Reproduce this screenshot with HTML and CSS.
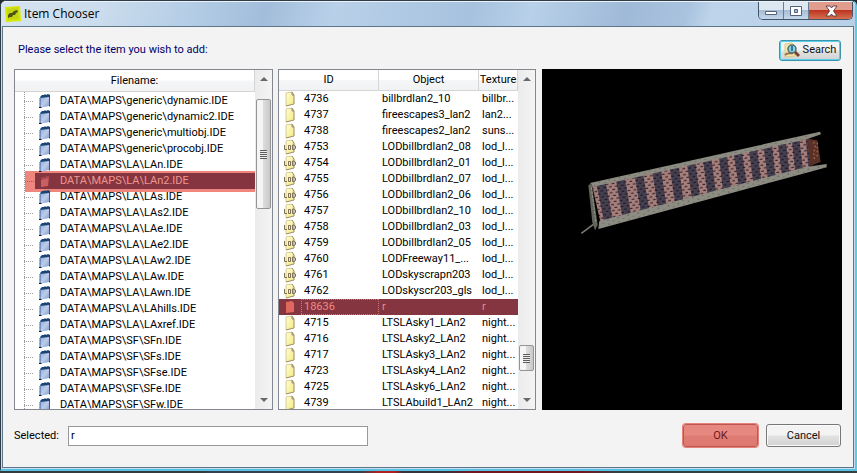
FILE: index.html
```html
<!DOCTYPE html>
<html lang="en">
<head>
<meta charset="utf-8">
<title>Item Chooser</title>
<link rel="stylesheet" href="styles.css">
</head>
<body>
<svg class="defs" aria-hidden="true">
  <defs>
    <linearGradient id="blue" x1="0" y1="0" x2="1" y2="1"><stop offset="0" stop-color="#8fabd4"/><stop offset=".5" stop-color="#bccbea"/><stop offset="1" stop-color="#8499cf"/></linearGradient>
    <linearGradient id="yellow" x1="0" y1="0" x2="1" y2="1"><stop offset="0" stop-color="#fffbd8"/><stop offset="1" stop-color="#f4ea7c"/></linearGradient>
    <symbol id="book" viewBox="0 0 14 16"><path d="M2 4l2-2h2l1-1 1 1 2-1 2 1v3L3 6z" fill="#17456f"/><path d="M2 5l9-1v9l-9 2z" fill="url(#blue)"/><path d="M11 4l1-1v10l-1 1z" fill="#3c4f80"/><path d="M2 5v9" stroke="#40639a" fill="none"/><path d="M1 14h3l-1 1H1z" fill="#15151c"/></symbol>
    <symbol id="page" viewBox="0 0 12 16"><path d="M2 2l6-1 2 3v9l-8 2z" fill="url(#yellow)"/><path d="M2 15V2l6-1" fill="none" stroke="#d9cc9a"/><path d="M8 1v3h2M8 1l2 3v9l-8 2" fill="none" stroke="#9b8b62"/></symbol>
    <symbol id="lod" viewBox="0 0 12 16"><path d="M2 2l6-1 2 3v9l-8 2z" fill="url(#yellow)"/><path d="M2 15V2l6-1" fill="none" stroke="#d9cc9a"/><path d="M8 1l2 3v9l-8 2" fill="none" stroke="#9b8b62"/><path d="M.5 6v4.500h2.500M4.500 6.500h2v4h-2zM8.500 6v4.500H10l1.500-1V7L10 6z" fill="none" stroke="#7a7055"/></symbol>
  </defs>
</svg>
<main class="window">
  <header class="titlebar">
    <svg class="app-icon" viewBox="0 0 16 16" aria-hidden="true"><path d="M0 1l15-1 1 15-15 1z" fill="#d8e800"/><path d="M2 3l11-2 1 12-11 1z" fill="#c4d516"/><path d="M3 9l2-2 2 0 2-2 3-1 1 2-2 1-1 2-2 0-1 2-2 0-2 1z" fill="#4b5412"/></svg>
    <h1 class="title">Item Chooser</h1>
    <div class="window-controls">
      <button class="control" aria-label="Minimize"><svg viewBox="0 0 14 12"><path d="M1.500 6.500h11v3h-11z" fill="#fff" stroke="#52637b"/></svg></button>
      <button class="control" aria-label="Maximize"><svg viewBox="0 0 14 12"><path d="M1.500 1.500h11v9h-11z" fill="#fff" stroke="#52637b"/><path d="M5.500 4.500h3v3h-3z" fill="#a6bdd9" stroke="#52637b"/></svg></button>
      <button class="control close" aria-label="Close"><svg viewBox="0 0 14 12"><path d="M2 1h4l1.500 2L9 1h4L9.500 6l3.500 5H9L7.500 9 6 11H2l3.500-5z" fill="#fff" stroke="#6e4143"/></svg></button>
    </div>
  </header>
  <div class="client">
    <div class="prompt">
      <p>Please select the item you wish to add:</p>
      <button class="button search"><svg viewBox="0 0 16 16" aria-hidden="true"><path d="M1 2l7-1 3 3v10l-10 1z" fill="#f3e7a5" stroke="#d8c98c"/><path d="M1 13c3-3 6-1 8-2" stroke="#9b6d51" stroke-width="2" fill="none"/><circle cx="8" cy="7" r="4" fill="#8bd3e2" stroke="#4c6c75" stroke-width="1.500"/><path d="M8 4v5" stroke="#347b99" stroke-width="2"/><path d="M11 10l4 4" stroke="#79442f" stroke-width="3"/></svg>Search</button>
    </div>
    <div class="panels">
      <section class="panel files">
        <div class="content">
          <h2 class="column-title">Filename:</h2>
          <ul class="tree">
            <li><svg><use href="#book"/></svg><span>DATA\MAPS\generic\dynamic.IDE</span></li>
            <li><svg><use href="#book"/></svg><span>DATA\MAPS\generic\dynamic2.IDE</span></li>
            <li><svg><use href="#book"/></svg><span>DATA\MAPS\generic\multiobj.IDE</span></li>
            <li><svg><use href="#book"/></svg><span>DATA\MAPS\generic\procobj.IDE</span></li>
            <li><svg><use href="#book"/></svg><span>DATA\MAPS\LA\LAn.IDE</span></li>
            <li class="selected"><svg viewBox="0 0 14 16"><path d="M3 5l8-2-1 10-7 1z" fill="#c95f62"/><path d="M3 5l8-2v2l-8 2z" fill="#a84650"/></svg><span>DATA\MAPS\LA\LAn2.IDE</span></li>
            <li><svg><use href="#book"/></svg><span>DATA\MAPS\LA\LAs.IDE</span></li>
            <li><svg><use href="#book"/></svg><span>DATA\MAPS\LA\LAs2.IDE</span></li>
            <li><svg><use href="#book"/></svg><span>DATA\MAPS\LA\LAe.IDE</span></li>
            <li><svg><use href="#book"/></svg><span>DATA\MAPS\LA\LAe2.IDE</span></li>
            <li><svg><use href="#book"/></svg><span>DATA\MAPS\LA\LAw2.IDE</span></li>
            <li><svg><use href="#book"/></svg><span>DATA\MAPS\LA\LAw.IDE</span></li>
            <li><svg><use href="#book"/></svg><span>DATA\MAPS\LA\LAwn.IDE</span></li>
            <li><svg><use href="#book"/></svg><span>DATA\MAPS\LA\LAhills.IDE</span></li>
            <li><svg><use href="#book"/></svg><span>DATA\MAPS\LA\LAxref.IDE</span></li>
            <li><svg><use href="#book"/></svg><span>DATA\MAPS\SF\SFn.IDE</span></li>
            <li><svg><use href="#book"/></svg><span>DATA\MAPS\SF\SFs.IDE</span></li>
            <li><svg><use href="#book"/></svg><span>DATA\MAPS\SF\SFse.IDE</span></li>
            <li><svg><use href="#book"/></svg><span>DATA\MAPS\SF\SFe.IDE</span></li>
            <li><svg><use href="#book"/></svg><span>DATA\MAPS\SF\SFw.IDE</span></li>
          </ul>
        </div>
        <div class="scrollbar"><i class="arrow up"></i><div class="track"><i class="thumb"></i></div><i class="arrow down"></i></div>
      </section>
      <section class="panel items">
        <div class="content">
          <table>
            <thead><tr><th>ID</th><th>Object</th><th>Texture</th></tr></thead>
            <tbody>
              <tr><td><svg><use href="#page"/></svg>4736</td><td>billbrdlan2_10</td><td>billbr...</td></tr>
              <tr><td><svg><use href="#page"/></svg>4737</td><td>fireescapes3_lan2</td><td>lan2...</td></tr>
              <tr><td><svg><use href="#page"/></svg>4738</td><td>fireescapes2_lan2</td><td>suns...</td></tr>
              <tr><td><svg><use href="#lod"/></svg>4753</td><td>LODbillbrdlan2_08</td><td>lod_l...</td></tr>
              <tr><td><svg><use href="#lod"/></svg>4754</td><td>LODbillbrdlan2_01</td><td>lod_l...</td></tr>
              <tr><td><svg><use href="#lod"/></svg>4755</td><td>LODbillbrdlan2_07</td><td>lod_l...</td></tr>
              <tr><td><svg><use href="#lod"/></svg>4756</td><td>LODbillbrdlan2_06</td><td>lod_l...</td></tr>
              <tr><td><svg><use href="#lod"/></svg>4757</td><td>LODbillbrdlan2_10</td><td>lod_l...</td></tr>
              <tr><td><svg><use href="#lod"/></svg>4758</td><td>LODbillbrdlan2_03</td><td>lod_l...</td></tr>
              <tr><td><svg><use href="#lod"/></svg>4759</td><td>LODbillbrdlan2_05</td><td>lod_l...</td></tr>
              <tr><td><svg><use href="#lod"/></svg>4760</td><td>LODFreeway11_...</td><td>lod_l...</td></tr>
              <tr><td><svg><use href="#lod"/></svg>4761</td><td>LODskyscrapn203</td><td>lod_l...</td></tr>
              <tr><td><svg><use href="#lod"/></svg>4762</td><td>LODskyscr203_gls</td><td>lod_l...</td></tr>
              <tr class="selected"><td><svg viewBox="0 0 12 16"><path d="M2 3l6-1 2 2v9l-8 1z" fill="#e0685e"/></svg>18636</td><td>r</td><td>r</td></tr>
              <tr><td><svg><use href="#page"/></svg>4715</td><td>LTSLAsky1_LAn2</td><td>night...</td></tr>
              <tr><td><svg><use href="#page"/></svg>4716</td><td>LTSLAsky2_LAn2</td><td>night...</td></tr>
              <tr><td><svg><use href="#page"/></svg>4717</td><td>LTSLAsky3_LAn2</td><td>night...</td></tr>
              <tr><td><svg><use href="#page"/></svg>4723</td><td>LTSLAsky4_LAn2</td><td>night...</td></tr>
              <tr><td><svg><use href="#page"/></svg>4725</td><td>LTSLAsky6_LAn2</td><td>night...</td></tr>
              <tr><td><svg><use href="#page"/></svg>4739</td><td>LTSLAbuild1_LAn2</td><td>night...</td></tr>
            </tbody>
          </table>
        </div>
        <div class="scrollbar"><i class="arrow up"></i><div class="track"><i class="thumb"></i></div><i class="arrow down"></i></div>
      </section>
      <section class="preview" aria-label="Model preview">
        <svg viewBox="-54 -123 900 1023" preserveAspectRatio="xMidYMid meet">
          <defs>
            <pattern id="brick" width="18" height="18" patternUnits="userSpaceOnUse" patternTransform="rotate(-7)"><path d="M1 4h8M10 13h8" stroke="#171016" stroke-width="3"/></pattern>
            <pattern id="speck" width="31" height="13" patternUnits="userSpaceOnUse" patternTransform="rotate(-13)"><path d="M2 3h4M18 9h3" stroke="#54534c" stroke-width="3"/></pattern>
            <clipPath id="deck"><path d="M96 226L742 84l10 86L122 338z"/></clipPath>
          </defs>
          <path d="M64 370l38-28 6-8" fill="none" stroke="#77786f" stroke-width="5"/>
          <g clip-path="url(#deck)">
            <path d="M90 215L755 70v120L115 345z" fill="#a67f7c"/>
            <path d="M107 210h29l24 130h-27zM166 200h28l22 130h-27zM223 190h26l22 125h-27zM276 178h27l19 125h-27zM328 165h28l17 125h-26zM380 155h26l16 120h-25zM428 145h26l16 115h-26zM476 135h25l14 115h-25zM520 125h26l16 110h-25zM566 115h25l14 105h-25zM610 105h26l12 105h-24zM653 95h25l12 105h-24zM695 85h23l12 105h-24zM736 75h20l10 105h-20z" fill="#463f50"/>
            <path d="M80 60h690v300H80z" fill="url(#brick)"/>
          </g>
          <path d="M90 219L780 65l3 8-40 14L100 230z" fill="#8d8c83"/>
          <path d="M118 333L742 170l58-8v10l-60 16L115 357z" fill="#8d8c83"/>
          <path d="M90 219L780 65l3 8-40 14L100 230zM118 333L742 170l58-8v10l-60 16L115 357z" fill="url(#speck)"/>
          <path d="M85 225l10-4 18 124-8 16-8-24z" fill="#63645b"/><path d="M94 232l14 108" stroke="#92938a" stroke-width="3" stroke-dasharray="8 4"/>
          <path d="M742 86l30 5 10 65-22 8-8 6z" fill="#5a3027"/><path d="M761 96l5 15-5 15 3 27M772 98v48" fill="none" stroke="#a06c50" stroke-width="4" stroke-dasharray="5 7"/>
        </svg>
      </section>
    </div>
    <footer class="footer">
      <label for="selected-item">Selected:</label>
      <input id="selected-item" type="text" value="r">
      <div class="actions"><button class="button ok">OK</button><button class="button">Cancel</button></div>
    </footer>
  </div>
</main>
<div class="desktop"></div>
</body>
</html>
```

FILE: styles.css
```css
* { box-sizing: border-box; }
body {
  margin: 0;
  min-height: 100vh;
  display: flex;
  flex-direction: column;
  background: #242a30;
  font: 11px/16px Roboto, "Liberation Sans", sans-serif;
  color: #000;
  overflow: hidden;
}
h1, h2, p, ul { margin: 0; padding: 0; font: inherit; }
button, input { font: inherit; color: inherit; }
.defs { position: absolute; width: 0; height: 0; }
.window {
  flex: 1;
  display: flex;
  flex-direction: column;
  border: 1px solid #303b46;
  border-right: 2px solid #5ccbe2;
  border-bottom: 2px solid #55c1e3;
  border-radius: 6px 6px 0 0;
  background: #c7def0;
}
.titlebar {
  height: 25px;
  display: flex;
  align-items: center;
  gap: 3px;
  padding-left: 4px;
  border-top: 1px solid #e8f3fb;
  border-radius: 5px 5px 0 0;
  background: linear-gradient(105deg, #d7e4f0 0%, #cadced 12%, #b3cce5 23%, #a2bddb 31%, #b9d0e8 39%, #a7c2df 55%, #b8d0e8 62%, #9fb9d8 73%, #a9c3df 80%, #bed4ea 83%, #bad0e7 100%);
}
.app-icon { width: 16px; height: 16px; }
.title { font: 12px/16px "Open Sans", "Noto Sans", sans-serif; }
.window-controls {
  margin-left: auto;
  margin-right: 2px;
  align-self: flex-start;
  display: flex;
  height: 18px;
  border: 1px solid #42536a;
  border-top: 0;
  border-radius: 0 0 5px 5px;
  overflow: hidden;
}
.control {
  width: 25px;
  padding: 0;
  border: 0;
  border-right: 1px solid #687c94;
  background: linear-gradient(#dce7f2 45%, #a7bdd5 50%, #c5d8ea);
  display: grid;
  place-items: center;
}
.control svg { width: 14px; height: 12px; }
.control.close { width: 43px; border: 0; background: linear-gradient(#e09c8c 45%, #bd3522 50%, #d5714f); }
.client {
  flex: 1;
  display: flex;
  flex-direction: column;
  margin: 0 1px 1px;
  padding: 0 11px 0 11px;
  border: 1px solid #5e7689;
  background: #f3f3f3;
}
.prompt { height: 42px; display: flex; align-items: center; justify-content: space-between; padding: 4px 1px 0 4px; color: #00006c; }
.button {
  display: flex;
  align-items: center;
  justify-content: center;
  width: 75px;
  height: 23px;
  padding: 0;
  border: 1px solid #777;
  border-radius: 3px;
  background: linear-gradient(#f3f3f3 48%, #e2e2e2 52%, #d2d2d2);
  box-shadow: inset 0 0 0 1px #fbfbfb;
  color: #111;
}
.search { width: 62px; height: 21px; gap: 3px; border-color: #3e94ab; box-shadow: inset 0 0 0 1px #58d0ec; }
.search svg { width: 16px; height: 16px; }
.panels { flex: 1; display: flex; min-height: 341px; }
.panel { display: flex; width: 259px; height: 341px; border: 1px solid #828790; background: #fff; overflow: hidden; }
.items { width: 258px; margin: 0 6px 0 5px; }
.content { flex: 1; min-width: 0; overflow: hidden; }
.column-title, th { height: 21px; font-weight: 400; text-align: center; background: linear-gradient(#fff 48%, #f5f6f7 52%, #f1f2f4); border-right: 1px solid #d5d5d5; border-bottom: 1px solid #d5d5d5; }
.column-title { height: 22px; line-height: 22px; }
.tree { list-style: none; padding: 1px 0 0 9px; background: repeating-linear-gradient(#999 0 1px, #fff 1px 2px) 9px 0 / 1px 100% no-repeat; }
.tree li { display: flex; align-items: center; height: 16px; white-space: nowrap; }
.tree li::before { content: ""; width: 10px; height: 1px; margin-right: 4px; background: repeating-linear-gradient(90deg, #999 0 1px, #fff 1px 2px); }
.tree svg { width: 14px; height: 16px; margin-right: 8px; }
.tree .selected { margin-left: 1px; background: linear-gradient(#85353f, #85353f) 10px 0 / 100% 100% no-repeat, #ee867d; box-shadow: 0 -2px #ee867d, 0 3px #ee867d; color: #ef9590; }
.tree .selected::before { width: 9px; background: repeating-linear-gradient(90deg, #a45953 0 1px, #ee867d 1px 2px); }
.scrollbar { flex: none; width: 17px; display: flex; flex-direction: column; align-items: center; background: linear-gradient(90deg, #ebebeb, #f4f4f4); }
.arrow { width: 0; height: 0; margin: 7px 0; border: 4px solid transparent; border-top: 0; border-bottom: 4px solid #686868; }
.down { border-bottom: 0; border-top: 4px solid #686868; }
.track { flex: 1; width: 100%; padding: 11px 1px 0; }
.items .track { padding-top: 257px; }
.thumb { display: grid; place-items: center; height: 110px; border: 1px solid #949494; border-radius: 2px; background: linear-gradient(90deg, #f5f5f5 45%, #dcdcdc 50%, #c9c9c9); }
.thumb::after { content: ""; width: 7px; height: 9px; background: repeating-linear-gradient(#5d5d5d 0 1px, #eee 1px 2px); }
.items .thumb { height: 26px; }
table { width: 100%; table-layout: fixed; border-collapse: separate; border-spacing: 0; white-space: nowrap; }
th { padding: 0; overflow: hidden; }
th:nth-child(1) { width: 100px; }
th:nth-child(2) { width: 100px; }
td { height: 16px; padding: 0 0 0 3px; overflow: hidden; }
td:first-child { padding-left: 5px; }
td svg { width: 12px; height: 16px; margin-right: 8px; vertical-align: top; }
tr.selected { background: #85353f; color: #ee8b84; }
tr.selected td:first-child { background: repeating-linear-gradient(90deg, #ce777a 0 1px, transparent 1px 2px) 22px 0 / 78px 1px no-repeat, repeating-linear-gradient(90deg, #ce777a 0 1px, transparent 1px 2px) 22px 15px / 78px 1px no-repeat, repeating-linear-gradient(#ce777a 0 1px, transparent 1px 2px) 22px 0 / 1px 100% no-repeat, repeating-linear-gradient(#ce777a 0 1px, transparent 1px 2px) 99px 0 / 1px 100% no-repeat; }
.preview { flex: 1; min-width: 0; height: 341px; background: #000; }
.preview svg { display: block; width: 100%; height: 100%; }
.footer { height: 57px; display: flex; align-items: center; gap: 8px; padding-bottom: 6px; }
.footer label { width: 46px; white-space: nowrap; }
.footer input { width: 300px; height: 20px; padding: 0 2px; border: 1px solid #999; background: #fff; outline: 0; }
.actions { margin-left: auto; margin-right: 1px; display: flex; gap: 8px; }
.ok { border-color: #bd5552; background: linear-gradient(#e78880 48%, #df7c73 52%, #db786f); box-shadow: 0 0 0 1px #e7827a; color: #6c1a1d; }
.desktop { height: 3px; background: linear-gradient(90deg, #353a3d 0 24%, #353f4d 24% 42%, #b02021 44% 46%, #37313b 47% 52%, #75161f 55% 68%, #343f42 72% 100%); }
```
